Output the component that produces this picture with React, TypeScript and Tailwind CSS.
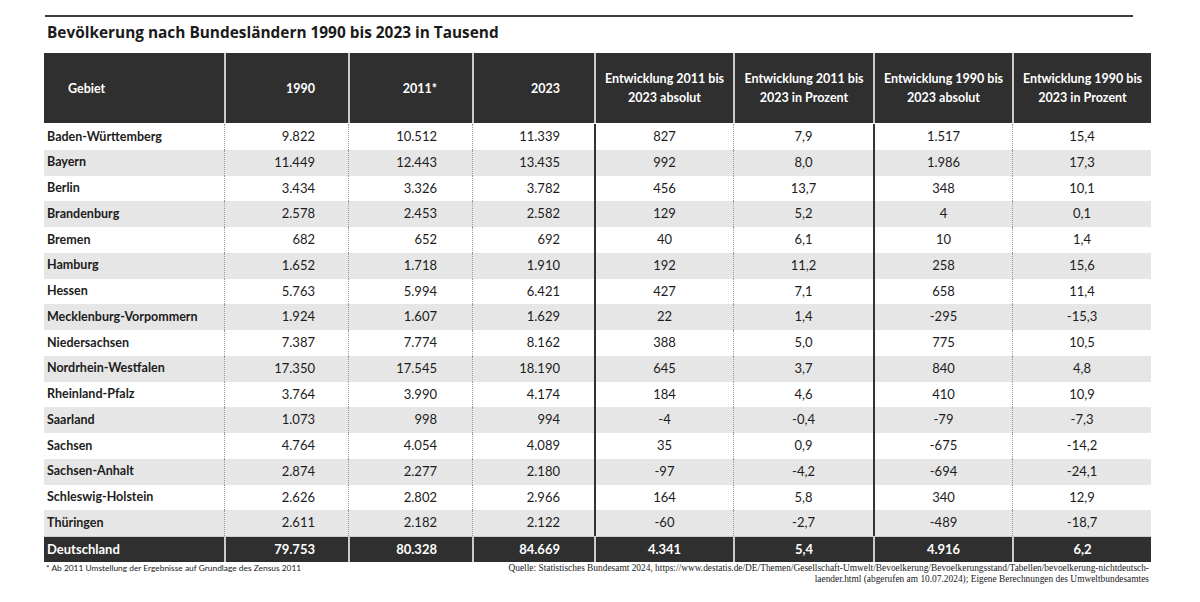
import React from "react";

const rows: string[][] = [
  ["Baden-Württemberg", "9.822", "10.512", "11.339", "827", "7,9", "1.517", "15,4"],
  ["Bayern", "11.449", "12.443", "13.435", "992", "8,0", "1.986", "17,3"],
  ["Berlin", "3.434", "3.326", "3.782", "456", "13,7", "348", "10,1"],
  ["Brandenburg", "2.578", "2.453", "2.582", "129", "5,2", "4", "0,1"],
  ["Bremen", "682", "652", "692", "40", "6,1", "10", "1,4"],
  ["Hamburg", "1.652", "1.718", "1.910", "192", "11,2", "258", "15,6"],
  ["Hessen", "5.763", "5.994", "6.421", "427", "7,1", "658", "11,4"],
  ["Mecklenburg-Vorpommern", "1.924", "1.607", "1.629", "22", "1,4", "-295", "-15,3"],
  ["Niedersachsen", "7.387", "7.774", "8.162", "388", "5,0", "775", "10,5"],
  ["Nordrhein-Westfalen", "17.350", "17.545", "18.190", "645", "3,7", "840", "4,8"],
  ["Rheinland-Pfalz", "3.764", "3.990", "4.174", "184", "4,6", "410", "10,9"],
  ["Saarland", "1.073", "998", "994", "-4", "-0,4", "-79", "-7,3"],
  ["Sachsen", "4.764", "4.054", "4.089", "35", "0,9", "-675", "-14,2"],
  ["Sachsen-Anhalt", "2.874", "2.277", "2.180", "-97", "-4,2", "-694", "-24,1"],
  ["Schleswig-Holstein", "2.626", "2.802", "2.966", "164", "5,8", "340", "12,9"],
  ["Thüringen", "2.611", "2.182", "2.122", "-60", "-2,7", "-489", "-18,7"],
];

const total = ["Deutschland", "79.753", "80.328", "84.669", "4.341", "5,4", "4.916", "6,2"];

const widths = [
  "w-[180px]",
  "w-[124px]",
  "w-[124px]",
  "w-[122px]",
  "w-[139px]",
  "w-[140px]",
  "w-[139px]",
  "w-[139px]",
];

const bodyBorders = [
  "",
  "border-l border-dotted border-[#9a9a9a]",
  "border-l border-dotted border-[#9a9a9a]",
  "border-l border-dotted border-[#9a9a9a]",
  "border-l-2 border-solid border-[#333333]",
  "border-l border-dotted border-[#9a9a9a]",
  "border-l-2 border-solid border-[#333333]",
  "border-l border-dotted border-[#9a9a9a]",
];

const align = [
  "justify-start pl-[3px]",
  "justify-end pr-[33px]",
  "justify-end pr-[35px]",
  "justify-end pr-[34px]",
  "justify-center",
  "justify-center",
  "justify-center",
  "justify-center",
];

const headers = [
  "Gebiet",
  "1990",
  "2011*",
  "2023",
  "Entwicklung 2011 bis\n2023 absolut",
  "Entwicklung 2011 bis\n2023 in Prozent",
  "Entwicklung 1990 bis\n2023 absolut",
  "Entwicklung 1990 bis\n2023 in Prozent",
];

const headerAlign = [
  "justify-start pl-[24px]",
  "justify-end pr-[33px]",
  "justify-end pr-[35px]",
  "justify-end pr-[34px]",
  "justify-center text-center",
  "justify-center text-center",
  "justify-center text-center",
  "justify-center text-center",
];

export default function App() {
  return (
    <div
      className="w-[1200px] h-[602px] bg-white text-[#1c1c1c] pl-[44px] pt-[15px]"
      style={{ fontFamily: "Lato, 'Noto Sans', sans-serif" }}
    >
      <div className="ml-[1px] w-[1088px] h-[2px] bg-[#3a3a3a]" />
      <div
        className="ml-[3px] mt-[6px] h-[20px] leading-[20px] text-[15.4px] font-bold text-[#1a1a1a]"
        style={{ fontFamily: "'Open Sans', sans-serif" }}
      >
        Bevölkerung nach Bundesländern 1990 bis 2023 in Tausend
      </div>
      <div className="mt-[10px] w-[1107px]">
        <div className="flex h-[70px] bg-[#2f2f2f] text-white font-bold text-[12.5px] leading-[19px]">
          {headers.map((h, i) => (
            <div
              key={i}
              className={`${widths[i]} flex items-center whitespace-pre-line ${headerAlign[i]} ${
                i > 0 ? "border-l-2 border-[#c9c9c9]" : ""
              }`}
            >
              {h}
            </div>
          ))}
        </div>
        <div className="h-[1px]" />
        {rows.map((r, ri) => (
          <div
            key={ri}
            className={`flex h-[25.75px] text-[13px] ${ri % 2 === 1 ? "bg-[#e6e6e6]" : "bg-white"}`}
          >
            {r.map((c, ci) => (
              <div
                key={ci}
                className={`${widths[ci]} flex items-center ${align[ci]} ${bodyBorders[ci]} ${
                  ci === 0 ? "font-bold text-[12.5px]" : ""
                }`}
              >
                {c}
              </div>
            ))}
          </div>
        ))}
        <div className="flex h-[26px] bg-[#2f2f2f] text-white font-bold text-[13px] border-t border-[#cfcfcf]">
          {total.map((c, ci) => (
            <div
              key={ci}
              className={`${widths[ci]} flex items-center ${align[ci]} ${
                ci > 0 ? "border-l-2 border-[#c9c9c9]" : ""
              }`}
            >
              {c}
            </div>
          ))}
        </div>
        <div className="flex justify-between mt-[1px]">
          <div className="pl-[2px] text-[8.4px] leading-[11px] text-[#222]">
            * Ab 2011 Umstellung der Ergebnisse auf Grundlage des Zensus 2011
          </div>
          <div
            className="text-right text-[9.4px] leading-[11px] text-[#222] pr-[2px]"
            style={{ fontFamily: "'Liberation Serif', serif" }}
          >
            <div>
              Quelle: Statistisches Bundesamt 2024,
              https://www.destatis.de/DE/Themen/Gesellschaft-Umwelt/Bevoelkerung/Bevoelkerungsstand/Tabellen/bevoelkerung-nichtdeutsch-
            </div>
            <div>
              laender.html (abgerufen am 10.07.2024); Eigene Berechnungen des Umweltbundesamtes
            </div>
          </div>
        </div>
      </div>
    </div>
  );
}
